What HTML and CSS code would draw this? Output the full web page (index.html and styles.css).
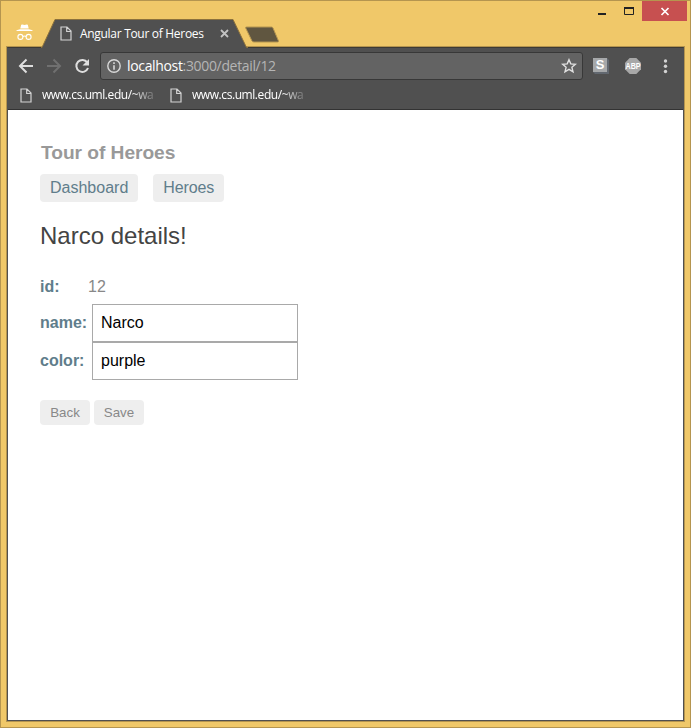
FILE: index.html
```html
<!DOCTYPE html>
<html lang="en">
<head>
<meta charset="utf-8">
<title>Angular Tour of Heroes</title>
<link rel="stylesheet" href="styles.css">
</head>
<body>
<div class="window">
  <header class="titlebar">
    <svg class="incognito" width="17" height="17" viewBox="0 0 17 17"><path d="M4.3 4.5 5.2.8 6.3.5 8.5 1 10.7.5l1.1.3.9 3.7z" fill="#fff"/><path d="M.5 6.300 4 5.200h9l3.500 1.100v.7H.5z" fill="#fff"/><g fill="none" stroke="#fff" stroke-width="1.100"><circle cx="4.400" cy="12.900" r="2.500"/><circle cx="12.600" cy="12.900" r="2.500"/><path d="M7 12.400q1.500-.8 3 0"/></g></svg>
    <div class="tab">
      <svg class="tab-shape" width="207" height="29" viewBox="0 0 207 29"><path d="M0 28.5H1L14 .5H192L205.500 28.500H207V29H0z" fill="#505050"/><path d="M0 28.500H1L14 .5H192L205.500 28.500H207" fill="none" stroke="#8b713d"/></svg>
      <svg class="page-icon" width="12" height="15" viewBox="0 0 12 15"><path d="M1 1h6l4 4v9H1zM6.700 1v4.500H11" fill="none" stroke="#d3d3d3" stroke-width="1.200"/></svg>
      <span class="tab-title">Angular Tour of Heroes</span>
      <svg class="tab-close" width="9" height="9" viewBox="0 0 9 9"><path d="m1 1 7 7m0-7-7 7" stroke="#c2c2c2" stroke-width="1.800"/></svg>
    </div>
    <svg class="new-tab" width="36" height="18" viewBox="0 0 36 18"><path d="M2.500 1H27.500q1 0 1.500 1l5.500 13q.3 1-1 1H10q-1.500 0-2-1L1.700 2q-.4-1 .8-1z" fill="#605640" stroke="#b49550"/></svg>
    <div class="controls">
      <svg class="minmax" width="50" height="20" viewBox="0 0 50 20"><path d="M6 12h8v2H6z" fill="#222"/><path d="M32.500 7h9v6.500h-9z" fill="none" stroke="#222"/><path d="M32 6h10v2H32z" fill="#222"/></svg>
      <span class="close"><svg width="10" height="9" viewBox="0 0 10 9"><path d="m1.500 1 7 7m0-7-7 7" stroke="#fff" stroke-width="1.700"/></svg></span>
    </div>
  </header>
  <div class="browser">
    <div class="toolbar">
      <svg class="nav" width="90" height="28" viewBox="0 0 90 28"><g fill="none" stroke-width="2"><path d="M25 14H12.500M18.500 7.500 12 14l6.500 6.500" stroke="#dedede"/><path d="M39 14h12.500M45.500 7.500 52 14l-6.500 6.500" stroke="#707070"/><path d="M79.300 10.500A6 6 0 1 0 80 16" stroke="#dedede"/></g><path d="M81 7v6.500h-6.500z" fill="#dedede"/></svg>
      <div class="address">
        <svg width="14" height="14" viewBox="0 0 14 14"><circle cx="7" cy="7" r="6.200" fill="none" stroke="#d8d8d8" stroke-width="1.400"/><path d="M6.200 3.300h1.600v1.600H6.200zm0 2.900h1.600v4.600H6.200z" fill="#d8d8d8"/></svg>
        <span class="url"><b>localhost</b>:3000/detail/12</span>
        <svg class="star" width="16" height="16" viewBox="0 0 16 16"><path d="m8 1.700 1.800 4.200 4.600.4-3.500 3 1.100 4.500L8 11.400l-4 2.400 1.100-4.500-3.500-3 4.600-.4z" fill="none" stroke="#e1e1e1" stroke-width="1.400"/></svg>
      </div>
      <svg class="extensions" width="100" height="28" viewBox="0 0 100 28"><path d="M10 6h14l2 2v14H12l-2-2z" fill="#626870"/><path d="M10 6h14v14H10z" fill="#a6a8aa"/><text x="17" y="17" class="s-label">S</text><path d="M46.700 6h6.600l4.700 4.700v6.600L53.300 22h-6.600L42 17.300v-6.600z" fill="#a8a8a8"/><text x="50" y="17" class="abp-label" textLength="15" lengthAdjust="spacingAndGlyphs">ABP</text><g fill="#d3d3d3"><circle cx="82.500" cy="9" r="1.700"/><circle cx="82.500" cy="14.300" r="1.700"/><circle cx="82.500" cy="19.500" r="1.700"/></g></svg>
    </div>
    <nav class="bookmarks">
      <a class="bookmark"><svg width="12" height="15" viewBox="0 0 12 15"><path d="M1 1h6l4 4v9H1zM6.700 1v4.500H11" fill="none" stroke="#d3d3d3" stroke-width="1.200"/></svg><span>www.cs.uml.edu/~wa</span></a>
      <a class="bookmark"><svg width="12" height="15" viewBox="0 0 12 15"><path d="M1 1h6l4 4v9H1zM6.700 1v4.500H11" fill="none" stroke="#d3d3d3" stroke-width="1.200"/></svg><span>www.cs.uml.edu/~wa</span></a>
    </nav>
    <main class="page">
      <h1>Tour of Heroes</h1>
      <nav class="links"><a>Dashboard</a><a>Heroes</a></nav>
      <h2>Narco details!</h2>
      <div class="row id-row"><label>id:</label><span>12</span></div>
      <div class="row"><label for="name">name:</label><input id="name" value="Narco"></div>
      <div class="row"><label for="color">color:</label><input id="color" value="purple"></div>
      <div class="buttons"><button>Back</button><button>Save</button></div>
    </main>
  </div>
</div>
</body>
</html>
```
FILE: styles.css
```css
* { box-sizing: border-box; }
body { margin: 0; font-family: "Liberation Sans", Arial, sans-serif; }
svg { display: block; flex: none; }
.window {
  width: 691px;
  height: 728px;
  border: 1px solid #b5954f;
  background: #f0c869;
  padding: 0 6px 6px;
  display: flex;
  flex-direction: column;
}
.titlebar { height: 46px; flex: none; display: flex; align-items: flex-start; }
.incognito { margin: 23px 0 0 9px; }
.tab {
  position: relative;
  z-index: 1;
  width: 207px;
  height: 29px;
  margin: 18px 0 0 8px;
  display: flex;
  align-items: center;
  padding-left: 19px;
  color: #fff;
}
.tab-shape { position: absolute; left: 0; top: 0; }
.page-icon, .tab-title, .tab-close { position: relative; }
.tab-title {
  width: 125px;
  margin-left: 8px;
  font: 12px/16px "Open Sans", sans-serif;
  letter-spacing: -0.3px;
  white-space: nowrap;
}
.tab-close { margin-left: 15px; }
.new-tab { margin: 25px 0 0 -4px; }
.controls { margin-left: auto; margin-right: -3px; display: flex; }
.close {
  width: 45px;
  height: 20px;
  background: #c75050;
  display: flex;
  align-items: center;
  justify-content: center;
}
.browser {
  flex: 1;
  width: 677px;
  background: #505050;
  border: 1px solid #505050;
  border-top-color: #3d3a34;
  box-shadow: 0 0 0 1px #b5954f;
  display: flex;
  flex-direction: column;
}
.toolbar { height: 36px; flex: none; display: flex; align-items: center; }
.nav { margin-right: 2px; }
.address {
  width: 483px;
  height: 28px;
  border: 1px solid #383838;
  border-radius: 3px;
  background: #636363;
  display: flex;
  align-items: center;
  padding: 0 5px 0 6px;
}
.url {
  margin-left: 6px;
  color: #b5b5b5;
  font: 14px/20px "Open Sans", sans-serif;
  letter-spacing: -0.34px;
}
.url b { font-weight: 400; color: #fff; }
.star { margin-left: auto; }
.s-label { fill: #fff; font: 700 13px "Liberation Sans", sans-serif; text-anchor: middle; }
.abp-label { fill: #fff; font: 700 9px "Liberation Sans", sans-serif; text-anchor: middle; }
.bookmarks {
  height: 26px;
  flex: none;
  display: flex;
  border-bottom: 1px solid #333;
  padding: 3px 0 0 12px;
}
.bookmark {
  width: 150px;
  height: 16px;
  display: flex;
  align-items: center;
  color: #fff;
  font: 500 12px/16px "Open Sans", sans-serif;
  letter-spacing: -0.43px;
}
.bookmark span {
  width: 114px;
  margin-left: 10px;
  overflow: hidden;
  white-space: nowrap;
  mask-image: linear-gradient(to right, #000 88px, transparent 118px);
}
.page { flex: 1; background: #fff; padding: 32px; }
h1 { margin: 0; padding-left: 1px; color: #999; font-size: 19.2px; line-height: 22px; letter-spacing: -0.05px; }
.links { display: flex; gap: 15px; margin-top: 10px; }
.links a {
  height: 28px;
  padding: 5px 10px;
  border-radius: 4px;
  background: #eee;
  color: #607d8b;
  font-size: 16px;
  line-height: 18px;
}
.links a:last-child { width: 71px; letter-spacing: -0.1px; }
h2 { margin: 20px 0 0; color: #444; font-size: 24px; font-weight: 400; line-height: 28px; }
.row { height: 38px; display: flex; align-items: center; font-size: 16px; color: #888; }
.row label { width: 52px; color: #607d8b; font-weight: 700; }
.id-row { height: 18px; margin: 28px 0 8px; }
.id-row label { width: 48px; }
.row input {
  width: 206px;
  height: 38px;
  padding: 0 8px;
  border: 1px solid #a9a9a9;
  border-radius: 0;
  background: #fff;
  color: #000;
  font: 16px "Liberation Sans", Arial, sans-serif;
}
.buttons { display: flex; gap: 4px; margin-top: 20px; }
button {
  width: 50px;
  height: 25px;
  padding: 0;
  border: 0;
  border-radius: 4px;
  background: #eee;
  color: #888;
  font: 13.33px "Liberation Sans", Arial, sans-serif;
}
```
